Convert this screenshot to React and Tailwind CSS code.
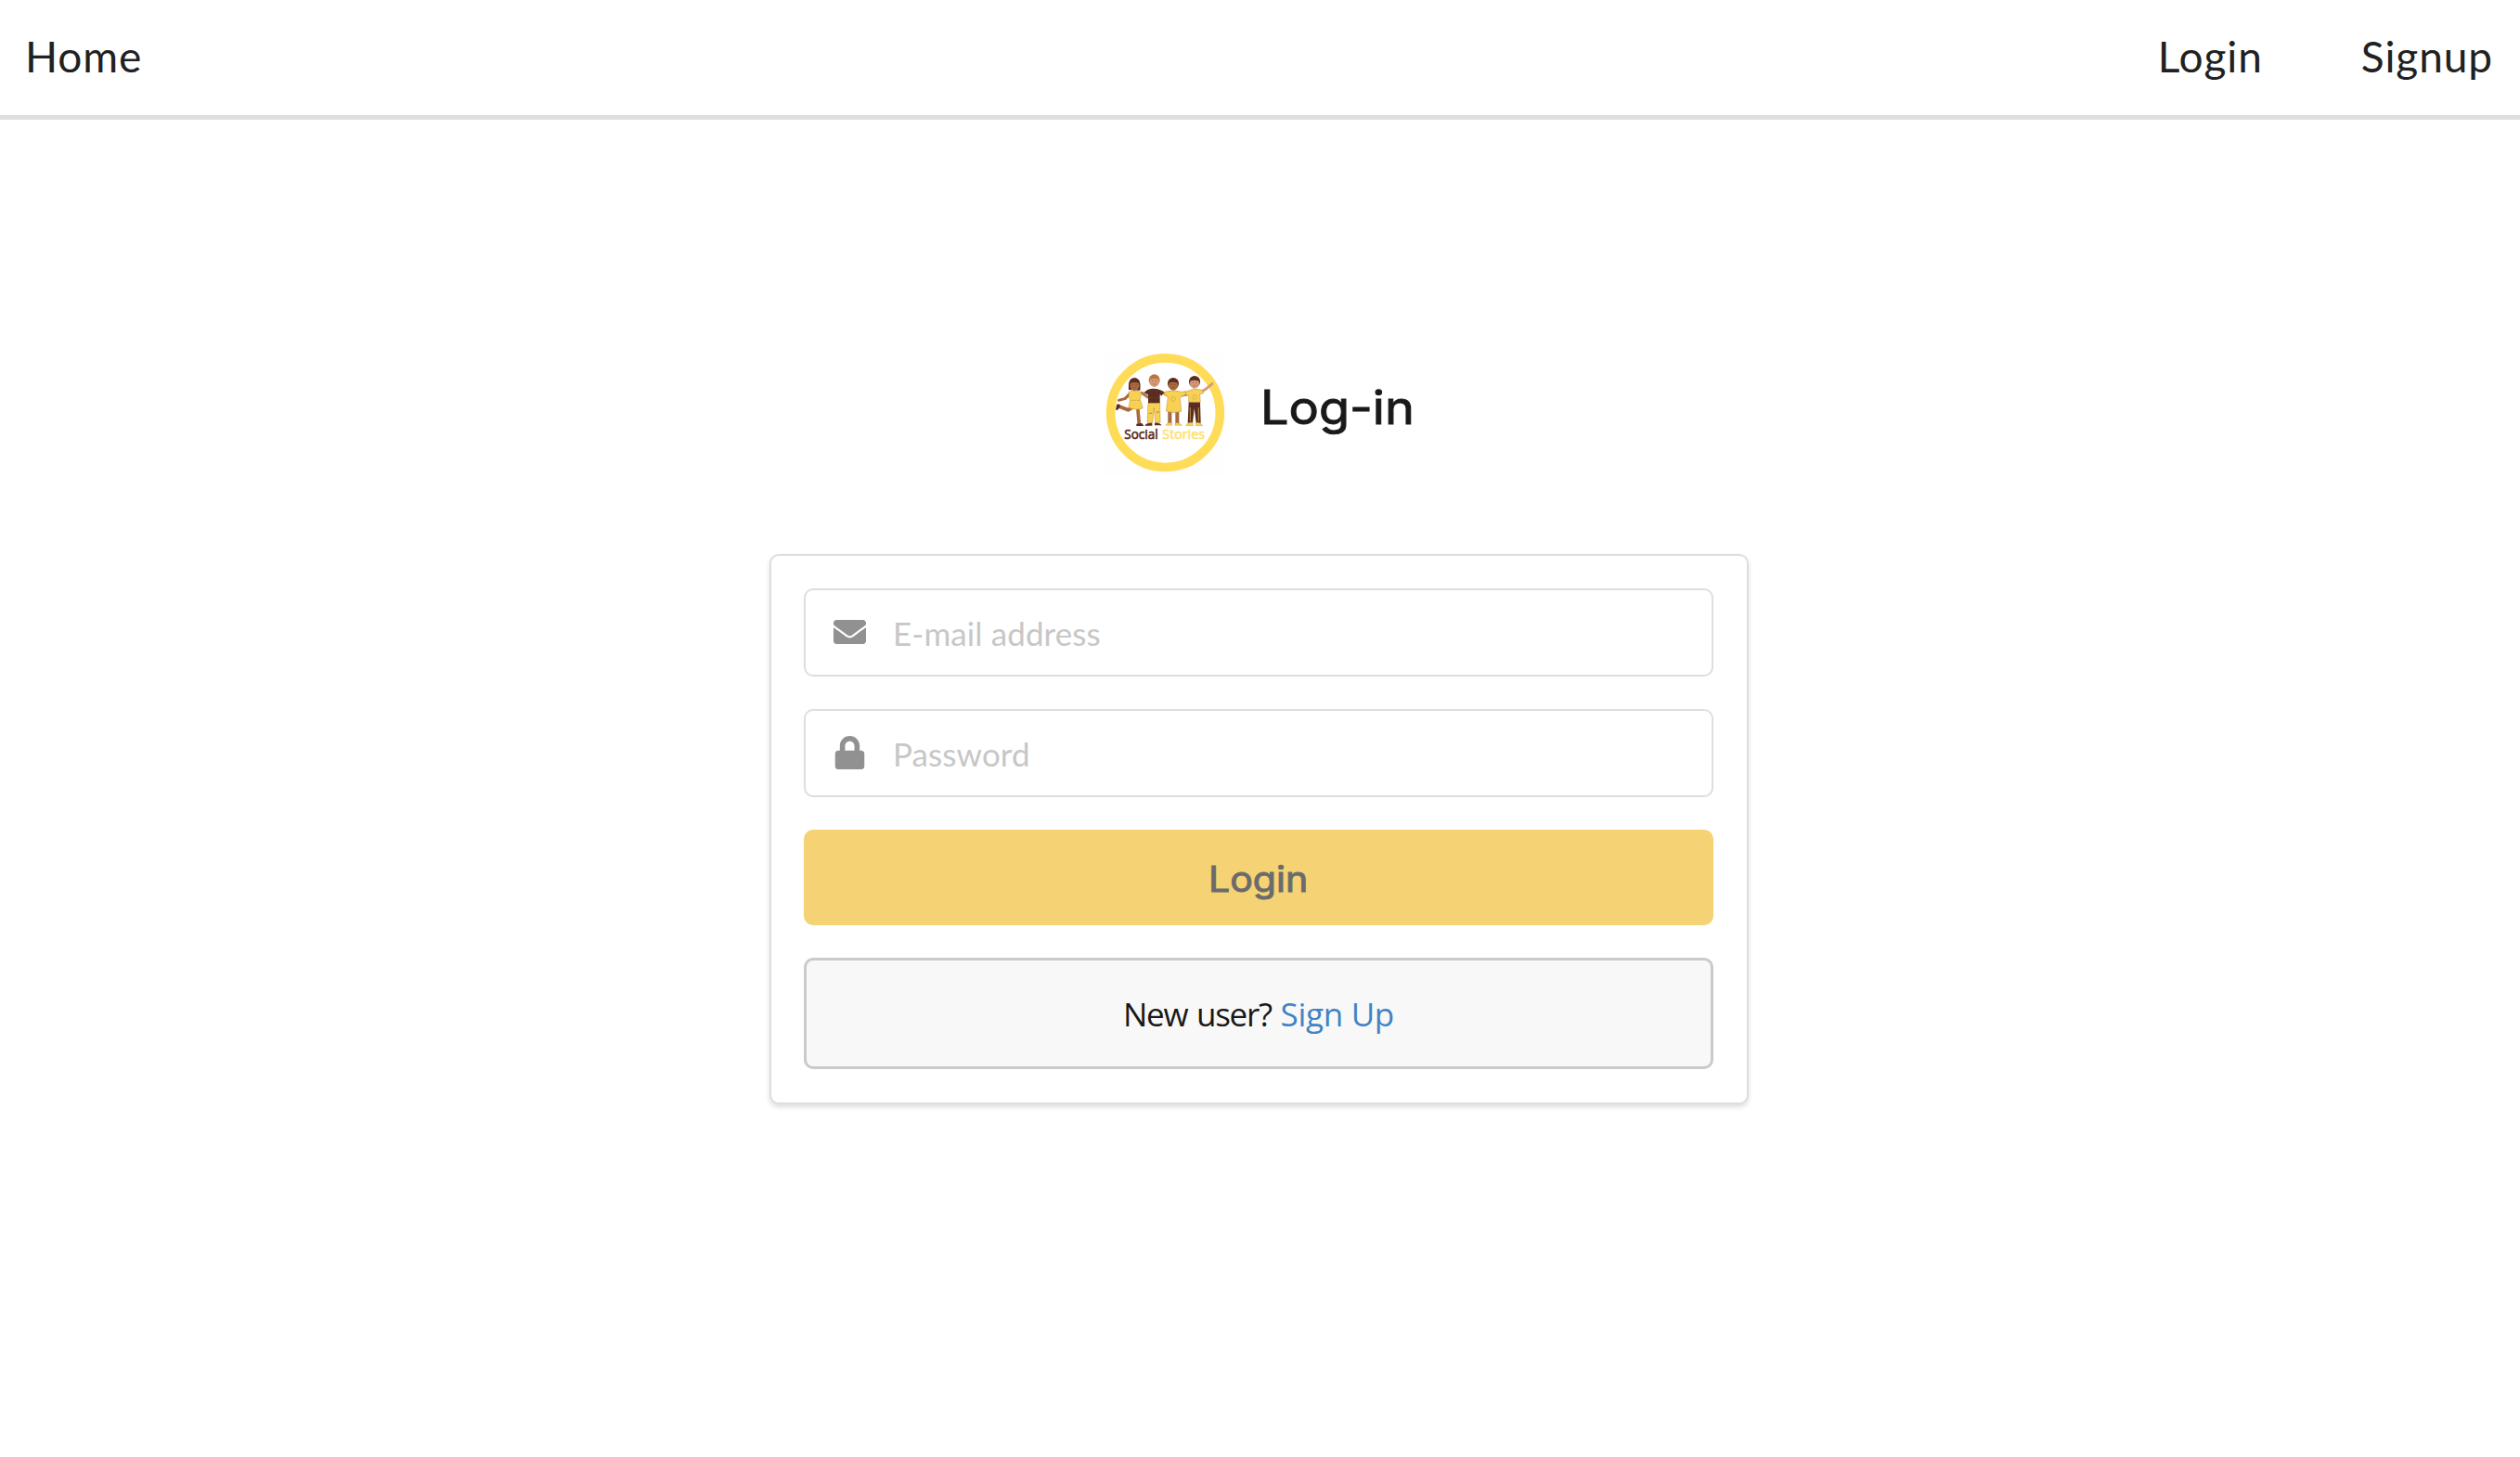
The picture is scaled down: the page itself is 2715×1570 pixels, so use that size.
import React from "react";

function Person({ x, y, hair, skin, shirt, children }) {
  return (
    <g transform={`translate(${x} ${y})`}>
      {children}
      <ellipse cx="0" cy="-1" rx="18" ry="19" fill={hair} />
      <ellipse cx="0" cy="4" rx="15" ry="17" fill={skin} />
      <path d="M-16 -3Q0 -9 16 -3L13 -12Q0 -20 -13 -12Z" fill={hair} />
      <path d="M-5 11Q0 15 5 11" fill="none" stroke="#7d4a3a" strokeWidth="1.5" />
      <path d="M-7 2h3M4 2h3" stroke="#5a3228" strokeWidth="2" />
      <circle cx="0" cy="49" r="7" fill="none" stroke={shirt} strokeWidth="1.5" />
    </g>
  );
}

function Logo() {
  return (
    <svg className="block size-[150px]" viewBox="0 0 450 450" role="img" aria-label="Social Stories">
      <rect x="27" y="33" width="393" height="394" fill="#fefefe" />
      <circle cx="226.500" cy="224" r="176.500" fill="#fff" stroke="#ffdc58" strokeWidth="29" />
      {/* raised and joined arms */}
      <g fill="none" strokeLinecap="round" strokeWidth="9">
        <path d="M112 162L97 178L76 184" stroke="#a9683e" />
        <path d="M150 160L170 174M216 158L238 170M280 168L298 164" stroke="#b87649" />
        <path d="M342 157L357 148L378 131" stroke="#d69a78" />
      </g>
      {/* first child, one leg kicked back */}
      <path d="M137 204L142 262" stroke="#a9683e" strokeWidth="11" />
      <path d="M121 206L106 215L77 204" fill="none" stroke="#a9683e" strokeWidth="12" strokeLinejoin="round" />
      <path d="M66 214L70 196L81 198L78 209L70 217Z" fill="#5b2c20" />
      <path d="M133 267V260L151 258L157 267Z" fill="#5b2c20" />
      <path d="M109 157Q128 148 149 158L145 181L154 209Q132 219 108 208L113 181L108 175Z" fill="#f8d054" stroke="#b98a35" strokeWidth="1.500" />
      <path d="M113 184H145" stroke="#b98a35" strokeWidth="1.500" />
      <path d="M108 150Q105 112 127 112Q149 114 145 152Z" fill="#5b2c20" />
      <Person x={127} y={132} hair="#5b2c20" skin="#a9683e" shirt="#f8d054" />
      {/* second child */}
      <path d="M171 192H209L210 256H194L190 208L185 256H168Z" fill="#f8d054" stroke="#b98a35" strokeWidth="1.500" />
      <path d="M174 226h10M197 222h10" stroke="#8d642f" strokeWidth="2" />
      <path d="M160 266Q164 256 184 257V266ZM192 257Q207 255 216 265H192Z" fill="#5b2c20" />
      <path d="M169 150Q191 141 214 152L222 159L214 170L209 164V193H171V166L164 163L157 159Z" fill="#5b2c20" />
      <path d="M173 176H208" stroke="#7a4635" strokeWidth="2" />
      <Person x={191} y={120} hair="#b7773e" skin="#d69a78" shirt="#5b2c20" />
      {/* third child */}
      <path d="M241 219V258M265 219V258" stroke="#a9683e" strokeWidth="12" />
      <path d="M228 265Q233 254 248 257V265ZM258 257Q271 254 280 265H258Z" fill="#f8d054" stroke="#b98a35" strokeWidth="1" />
      <path d="M224 157Q251 148 281 157L292 154L294 165L274 174L278 220Q252 228 229 219L235 173L222 165Z" fill="#f8d054" stroke="#b98a35" strokeWidth="1.500" />
      <Person x={252} y={131} hair="#5b2c20" skin="#a9683e" shirt="#c49636" />
      {/* fourth child */}
      <path d="M302 190H339L341 257H326L320 210L315 257H299Z" fill="#5b2c20" />
      <path d="M307 207V253M334 207V253" stroke="#a47a3a" strokeWidth="4" />
      <path d="M293 266Q297 254 316 256V266ZM325 256Q341 255 347 266H325Z" fill="#f8d054" stroke="#b98a35" strokeWidth="1" />
      <path d="M292 157Q320 143 345 151L350 161L338 164L340 190H302V169L295 169Z" fill="#f8d054" stroke="#b98a35" strokeWidth="1.500" />
      <Person x={321} y={125} hair="#5b2c20" skin="#d69a78" shirt="#c49636" />
      <g fontFamily="'Open Sans', sans-serif" fontSize="46" strokeLinejoin="round" fontWeight="500">
        <text x="94" y="310" textLength="109" lengthAdjust="spacingAndGlyphs" fill="#5b2c20" stroke="#5b2c20" strokeWidth="2">Social</text>
        <text x="217" y="310" textLength="137" lengthAdjust="spacingAndGlyphs" fill="#ffe06b" stroke="#ffe06b" strokeWidth="1.500">Stories</text>
      </g>
    </svg>
  );
}

function Envelope() {
  return (
    <svg className="h-[26px] w-[35px] shrink-0" viewBox="0 64 512 384" preserveAspectRatio="none" fill="#919191">
      <path d="M502.300 190.800c3.900-3.100 9.700-.2 9.700 4.700V400c0 26.500-21.500 48-48 48H48c-26.500 0-48-21.500-48-48V195.600c0-5 5.700-7.800 9.700-4.700 22.400 17.400 52.100 39.500 154.100 113.600 21.100 15.400 56.700 47.800 92.200 47.600 35.700.3 72-32.800 92.300-47.600 102-74.100 131.600-96.300 154-113.700zM256 320c23.200.4 56.600-29.200 73.400-41.400 132.700-96.300 142.800-104.700 173.400-128.700 5.800-4.500 9.200-11.500 9.200-18.900v-19c0-26.500-21.500-48-48-48H48c-26.500 0-48 21.500-48 48v19c0 7.400 3.400 14.300 9.200 18.900 30.600 23.900 40.700 32.400 173.400 128.700 16.800 12.200 50.200 41.800 73.400 41.400z" />
    </svg>
  );
}

function Lock() {
  return (
    <svg className="h-[36px] w-[35px] shrink-0" viewBox="0 0 448 512" fill="#919191">
      <path d="M400 224h-24v-72C376 68.200 307.800 0 224 0S72 68.200 72 152v72H48c-26.500 0-48 21.500-48 48v192c0 26.500 21.500 48 48 48h352c26.500 0 48-21.500 48-48V272c0-26.500-21.500-48-48-48zm-104 0H152v-72c0-39.700 32.300-72 72-72s72 32.300 72 72v72z" />
    </svg>
  );
}

function Field({ type, placeholder, children }) {
  return (
    <label className="flex h-[95px] rounded-[10px] border-2 border-[#dededf] bg-white pl-[30px]">
      {children}
      <input
        type={type}
        placeholder={placeholder}
        className="ml-[29px] mt-[2px] min-w-0 flex-1 bg-transparent font-['Lato',sans-serif] text-[35px] tracking-[0.1px] outline-none placeholder:text-[#c7c7c7] placeholder:opacity-100"
      />
    </label>
  );
}

export default function App() {
  return (
    <div className="min-h-[1570px] w-full bg-white font-['Lato',sans-serif] text-[#212121]">
      <nav className="flex h-[129px] items-center justify-between border-b-[5px] border-[#dedede] pb-[2px] pl-[27px] pr-[29px] text-[46px] leading-none tracking-[0.9px]">
        <a href="#home">Home</a>
        <div className="flex gap-[106px]">
          <a href="#login">Login</a>
          <a href="#signup">Signup</a>
        </div>
      </nav>
      <main className="flex flex-col items-center pr-[2px] pt-[241px]">
        <header className="flex h-[150px] w-[353px] items-center">
          <Logo />
          <h1 className="ml-[28px] mt-[-12px] origin-left scale-x-[1.08] whitespace-nowrap font-['Inter',sans-serif] text-[50px] font-normal leading-none text-[#191919] [-webkit-text-stroke:1px_#191919] [stroke-linejoin:round]">Log-in</h1>
        </header>
        <form className="mt-[77px] flex w-[1055px] flex-col gap-[35px] rounded-[10px] border-2 border-[#dededf] bg-white pt-[35px] pr-[36px] pb-[36px] pl-[35px] shadow-[0_3px_5px_0_rgba(34,36,38,0.15)]" onSubmit={(e) => e.preventDefault()}>
          <Field type="email" placeholder="E-mail address">
            <span className="mt-[32px]"><Envelope /></span>
          </Field>
          <Field type="password" placeholder="Password">
            <span className="mt-[27px]"><Lock /></span>
          </Field>
          <button className="flex h-[103px] items-center justify-center rounded-[10px] bg-[#f5d273] pt-[3px] font-['Inter',sans-serif] text-[38px] font-normal text-[#6b6b6b] [-webkit-text-stroke:1px_#6b6b6b]">
            <span className="inline-block scale-x-[1.08]">Login</span>
          </button>
          <div className="flex h-[120px] items-center justify-center rounded-[10px] border-[3px] border-[#c9caca] bg-[#f8f8f8] pt-[2px] font-['Open_Sans',sans-serif] text-[35px] text-[#191919]">
            <p className="tracking-[-1.3px] [word-spacing:2px]">New user? <a href="#signup" className="tracking-[-0.3px] text-[#4183c4] [word-spacing:0px]">Sign Up</a></p>
          </div>
        </form>
      </main>
    </div>
  );
}
